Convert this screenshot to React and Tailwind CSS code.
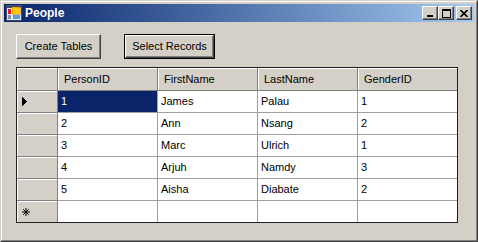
import React from "react";

const rows = [
  ["1", "James", "Palau", "1"],
  ["2", "Ann", "Nsang", "2"],
  ["3", "Marc", "Ulrich", "1"],
  ["4", "Arjuh", "Namdy", "3"],
  ["5", "Aisha", "Diabate", "2"],
];

function CapButton({ children, className = "" }) {
  return (
    <div
      className={
        "w-[16px] h-[14px] bg-[#d4d0c8] border border-t-white border-l-white border-r-[#404040] border-b-[#404040] shadow-[inset_-1px_-1px_0_#808080] flex items-center justify-center " +
        className
      }
    >
      {children}
    </div>
  );
}

function WinButton({ label, width, isDefault }) {
  const inner = (
    <div
      className={
        "h-full w-full bg-[#d4d0c8] border border-t-white border-l-white border-r-[#404040] border-b-[#404040] shadow-[inset_-1px_-1px_0_#808080] flex items-center justify-center text-[11px] text-black"
      }
    >
      {label}
    </div>
  );
  if (isDefault) {
    return (
      <div className={"h-[25px] border border-black " + width}>{inner}</div>
    );
  }
  return <div className={"h-[25px] " + width}>{inner}</div>;
}

const headerCell =
  "bg-[#d4d0c8] border-r border-b border-r-[#808080] border-b-[#808080] shadow-[inset_1px_1px_0_#ffffff]";

export default function App() {
  const cols = ["PersonID", "FirstName", "LastName", "GenderID"];
  const widths = ["w-[100px]", "w-[100px]", "w-[100px]", "w-[99px]"];
  return (
    <div className="w-[478px] h-[242px] bg-[#d4d0c8] border border-t-[#d4d0c8] border-l-[#d4d0c8] border-r-[#404040] border-b-[#404040] flex font-['Liberation_Sans',Arial,sans-serif] text-black select-none">
      <div className="flex-1 flex flex-col border border-t-white border-l-white border-r-[#808080] border-b-[#808080] p-[2px]">
        {/* Title bar */}
        <div className="h-[18px] bg-gradient-to-r from-[#0a246a] to-[#a6caf0] flex items-center pl-[2px] pr-[2px]">
          <svg width="16" height="16" viewBox="0 0 16 16" shapeRendering="crispEdges">
            <rect x="0.5" y="0.5" width="15" height="15" fill="#e6e6ee" stroke="#3c4a78" />
            <rect x="1" y="1" width="14" height="2" fill="#3c4a78" />
            <rect x="2" y="4" width="3" height="5" fill="#d82020" />
            <rect x="2" y="10" width="3" height="4" fill="#8890a8" />
            <rect x="6" y="2" width="8" height="7" fill="#f8c800" stroke="#d08000" strokeWidth="0.5" />
            <rect x="7" y="10" width="7" height="4" fill="#5a9ae8" />
          </svg>
          <span className="ml-[3px] text-white font-bold text-[12px] leading-none">
            People
          </span>
          <div className="ml-auto flex items-center">
            <CapButton>
              <svg width="8" height="8" viewBox="0 0 8 8" shapeRendering="crispEdges">
                <rect x="1" y="6" width="6" height="2" fill="#000" />
              </svg>
            </CapButton>
            <CapButton>
              <svg width="9" height="9" viewBox="0 0 9 9" shapeRendering="crispEdges">
                <rect x="0.5" y="0.5" width="8" height="8" fill="none" stroke="#000" />
                <rect x="0" y="1" width="9" height="1" fill="#000" />
              </svg>
            </CapButton>
            <CapButton className="ml-[2px]">
              <svg width="8" height="7" viewBox="0 0 8 7">
                <path d="M0.5 0 L7.5 7 M7.5 0 L0.5 7" stroke="#000" strokeWidth="1.6" />
              </svg>
            </CapButton>
          </div>
        </div>

        {/* Client area */}
        <div className="flex-1 flex flex-col pl-[12px] pt-[12px]">
          <div className="flex items-start">
            <WinButton label="Create Tables" width="w-[85px]" />
            <div className="ml-[23px]">
              <WinButton label="Select Records" width="w-[91px]" isDefault />
            </div>
          </div>

          {/* Grid */}
          <div className="mt-[8px] w-[442px] border border-[#202020] bg-[#808080] flex flex-col text-[11px]">
            <div className="flex h-[23px]">
              <div className={"w-[41px] " + headerCell} />
              {cols.map((c, i) => (
                <div
                  key={c}
                  className={
                    widths[i] +
                    " flex items-center pl-[6px] " +
                    (i === 3
                      ? "bg-[#d4d0c8] border-b border-b-[#808080] shadow-[inset_1px_1px_0_#ffffff]"
                      : headerCell)
                  }
                >
                  {c}
                </div>
              ))}
            </div>
            {rows.map((r, ri) => (
              <div key={ri} className="flex h-[22px]">
                <div className={"w-[41px] flex items-center pl-[5px] " + headerCell}>
                  {ri === 0 && (
                    <svg width="5" height="9" viewBox="0 0 5 9" shapeRendering="crispEdges">
                      <path d="M0 0 L5 4.5 L0 9 Z" fill="#000" />
                    </svg>
                  )}
                </div>
                {r.map((v, ci) => {
                  const selected = ri === 0 && ci === 0;
                  return (
                    <div
                      key={ci}
                      className={
                        widths[ci] +
                        " flex items-center pl-[3px] border-b border-b-[#a0a0a0] " +
                        (ci < 3 ? "border-r border-r-[#a0a0a0] " : "") +
                        (selected ? "bg-[#0a246a] text-white" : "bg-white text-black")
                      }
                    >
                      {v}
                    </div>
                  );
                })}
              </div>
            ))}
            <div className="flex h-[21px]">
              <div className={"w-[41px] flex items-center pl-[5px] bg-[#d4d0c8] border-r border-r-[#808080] shadow-[inset_1px_1px_0_#ffffff]"}>
                <svg width="8" height="8" viewBox="0 0 8 8">
                  <path d="M4 0 V8 M0 4 H8 M1.2 1.2 L6.8 6.8 M6.8 1.2 L1.2 6.8" stroke="#000" strokeWidth="1" />
                </svg>
              </div>
              {widths.map((w, ci) => (
                <div
                  key={ci}
                  className={
                    w + " bg-white " + (ci < 3 ? "border-r border-r-[#a0a0a0]" : "")
                  }
                />
              ))}
            </div>
          </div>
        </div>
      </div>
    </div>
  );
}
